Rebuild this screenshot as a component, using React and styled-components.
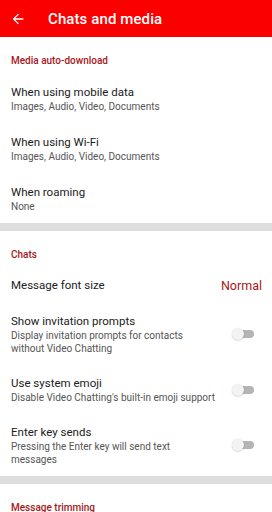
import React from "react";
import styled, { createGlobalStyle } from "styled-components";

const GlobalStyle = createGlobalStyle`
  html, body {
    margin: 0;
    padding: 0;
    background: #ffffff;
  }
  body {
    font-family: Roboto, "Noto Sans", "Liberation Sans", sans-serif;
    -webkit-font-smoothing: antialiased;
  }
`;

const Screen = styled.div`
  width: 272px;
  height: 512px;
  overflow: hidden;
  background: #ffffff;
`;

const AppBar = styled.div`
  display: flex;
  align-items: center;
  height: 37px;
  background-color: #fb0000;
  padding: 0 0 0 10px;
  box-sizing: border-box;
`;

const BackButton = styled.div`
  display: flex;
  align-items: center;
  justify-content: center;
  width: 16px;
  height: 16px;
`;

const AppTitle = styled.span`
  margin-left: 22px;
  color: #ffffff;
  font-size: 15px;
  font-weight: 500;
  letter-spacing: 0.1px;
`;

const SectionTitle = styled.div`
  padding: 17px 11px 5px;
  line-height: 14px;
  font-size: 10px;
  font-weight: 500;
  color: #a8161a;
`;

const Band = styled.div`
  height: 8px;
  background-color: #dedede;
`;

const Row = styled.div`
  display: flex;
  align-items: center;
  justify-content: space-between;
  box-sizing: border-box;
  min-height: ${props => props.minH || 0}px;
  padding: 10px 18px 10px 11px;
  padding-right: ${props => (props.wide ? 10 : 18)}px;
`;

const RowText = styled.div`
  display: flex;
  flex-direction: column;
  max-width: ${props => props.maxW || 240}px;
`;

const RowTitle = styled.span`
  font-size: 11.5px;
  line-height: 16px;
  color: #212121;
`;

const RowSub = styled.span`
  font-size: 10px;
  line-height: 13px;
  color: #555555;
`;

const ValueText = styled.span`
  font-size: 12.5px;
  color: #a8161a;
`;

const Switch = styled.div`
  position: relative;
  width: 22px;
  height: 12px;
  flex-shrink: 0;
`;

const SwitchTrack = styled.div`
  position: absolute;
  left: 2px;
  right: 0;
  top: 2px;
  height: 8px;
  border-radius: 4px;
  background-color: #b4b4b4;
`;

const SwitchThumb = styled.div`
  position: absolute;
  left: 0;
  top: 0;
  width: 12px;
  height: 12px;
  border-radius: 50%;
  background-color: #f3f3f3;
  box-shadow: 0 0.5px 1.5px rgba(0, 0, 0, 0.25);
`;

function Toggle() {
  return (
    <Switch>
      <SwitchTrack />
      <SwitchThumb />
    </Switch>
  );
}

function Setting({ title, sub, minH, maxW, right, wide }) {
  return (
    <Row minH={minH} wide={wide}>
      <RowText maxW={maxW}>
        <RowTitle>{title}</RowTitle>
        {sub && <RowSub>{sub}</RowSub>}
      </RowText>
      {right}
    </Row>
  );
}

export default function App() {
  return (
    <Screen>
      <GlobalStyle />
      <AppBar>
        <BackButton>
          <svg width="16" height="16" viewBox="0 0 24 24">
            <path
              d="M20 11H7.83l5.59-5.59L12 4l-8 8 8 8 1.41-1.41L7.83 13H20v-2z"
              fill="#ffffff"
            />
          </svg>
        </BackButton>
        <AppTitle>Chats and media</AppTitle>
      </AppBar>

      <SectionTitle>Media auto-download</SectionTitle>
      <Setting minH={50} title="When using mobile data" sub="Images, Audio, Video, Documents" />
      <Setting minH={50} title="When using Wi-Fi" sub="Images, Audio, Video, Documents" />
      <Setting minH={50} title="When roaming" sub="None" />
      <Band />

      <SectionTitle>Chats</SectionTitle>
      <Setting
        title="Message font size"
        wide
        right={<ValueText>Normal</ValueText>}
      />
      <Setting
        title="Show invitation prompts"
        sub="Display invitation prompts for contacts without Video Chatting"
        maxW={190}
        right={<Toggle />}
      />
      <Setting
        title="Use system emoji"
        sub="Disable Video Chatting's built-in emoji support"
        maxW={215}
        right={<Toggle />}
      />
      <Setting
        title="Enter key sends"
        sub="Pressing the Enter key will send text messages"
        maxW={180}
        right={<Toggle />}
      />
      <Band />

      <SectionTitle>Message trimming</SectionTitle>
    </Screen>
  );
}
